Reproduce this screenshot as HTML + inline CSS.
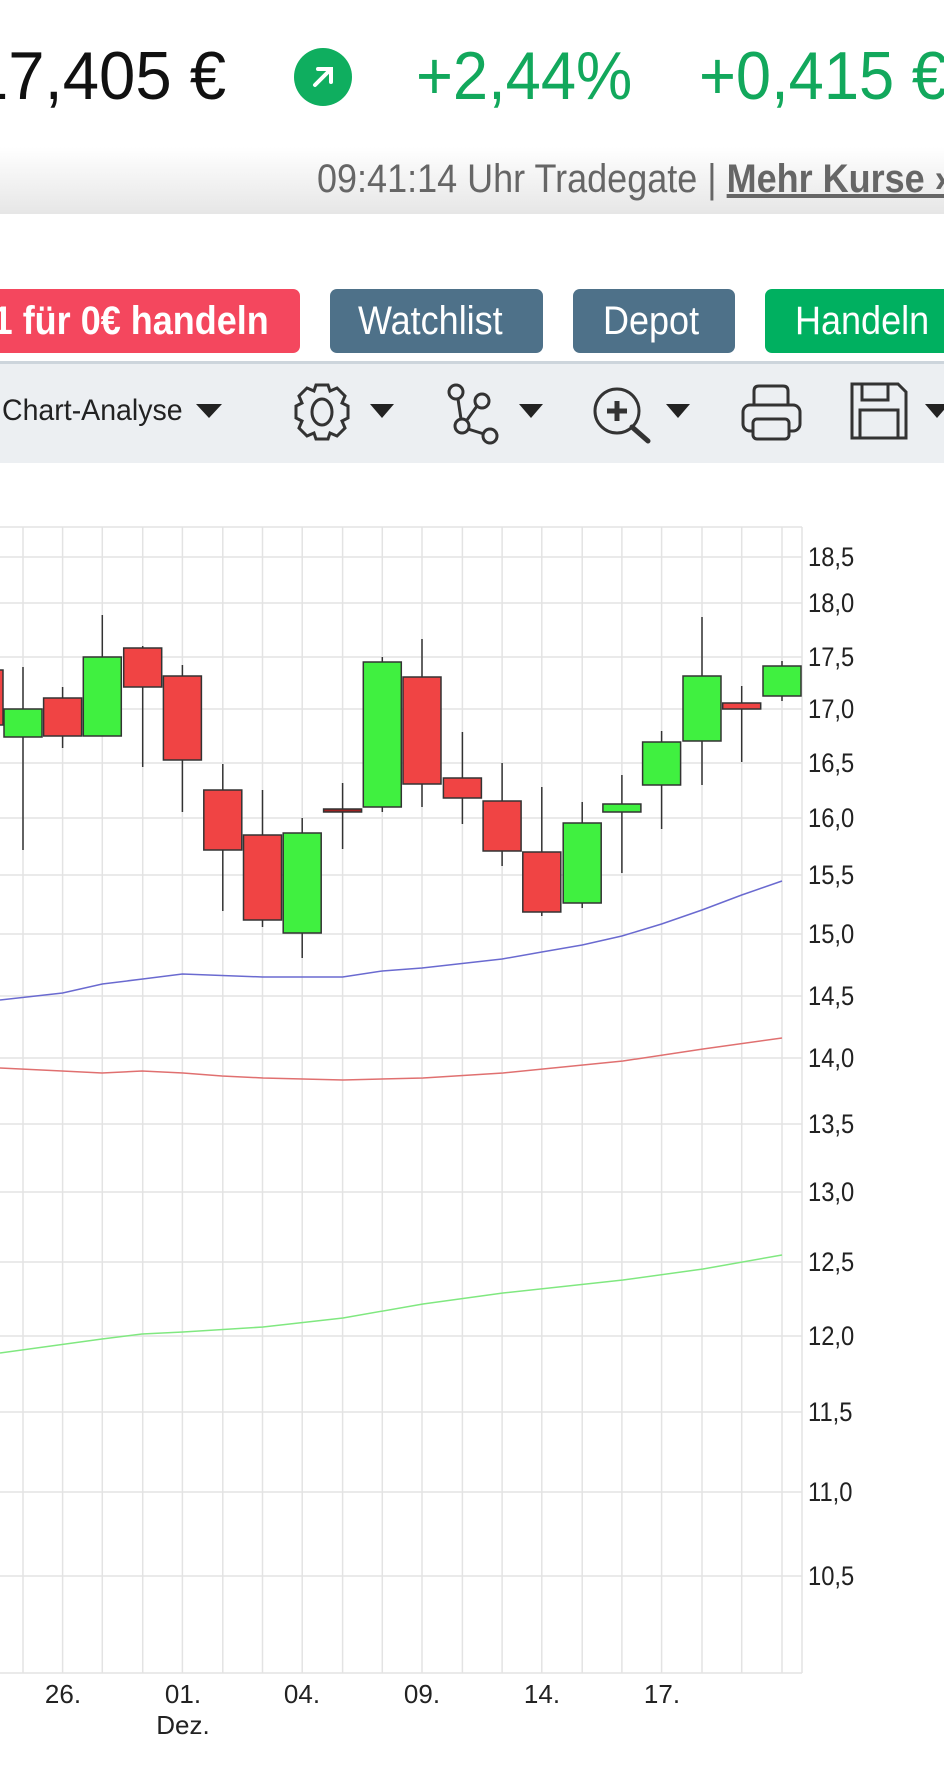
<!DOCTYPE html>
<html><head><meta charset="utf-8"><style>
*{margin:0;padding:0;box-sizing:border-box}
body{width:944px;height:1770px;background:#fff;position:relative;overflow:hidden;font-family:"Liberation Sans",sans-serif}
.a{position:absolute;white-space:nowrap}
.n{display:inline-block;transform-origin:left center;white-space:nowrap}
.btn{position:absolute;top:289px;height:64px;border-radius:7px;color:#fff;font-size:40px;line-height:64px;overflow:hidden;white-space:nowrap}
</style></head><body>
<div class="a" style="left:-28px;top:36px;font-size:68px;line-height:80px;color:#111"><span class="n" style="transform:scaleX(.96)">17,405 €</span></div>
<div class="a" style="left:294px;top:48px;width:58px;height:58px;border-radius:50%;background:#0fae5f"></div>
<svg class="a" style="left:294px;top:48px" width="58" height="58" viewBox="0 0 58 58"><path d="M21 37 L36 22 M24 21 H37 V34" stroke="#fff" stroke-width="4" fill="none" stroke-linecap="round"/></svg>
<div class="a" style="left:416px;top:36px;font-size:68px;line-height:80px;color:#12a85c"><span class="n" style="transform:scaleX(.93)">+2,44%</span></div>
<div class="a" style="left:699px;top:36px;font-size:68px;line-height:80px;color:#12a85c"><span class="n" style="transform:scaleX(.93)">+0,415 €</span></div>
<div class="a" style="left:0;top:147px;width:944px;height:67px;background:linear-gradient(#ffffff,#e6e6e6)"></div>
<div class="a" style="left:317px;top:156px;font-size:40px;line-height:46px;color:#666"><span class="n" style="transform:scaleX(.9)">09:41:14 Uhr Tradegate | <b style="text-decoration:underline">Mehr Kurse »</b></span></div>
<div class="btn" style="left:-20px;width:320px;background:#f4475e;font-weight:bold"><span class="n" style="position:absolute;right:31px;transform-origin:right center;transform:scaleX(.9)">1 für 0€ handeln</span></div>
<div class="btn" style="left:330px;width:213px;background:#4e7189"><span class="n" style="position:absolute;left:28px;transform:scaleX(.9)">Watchlist</span></div>
<div class="btn" style="left:573px;width:162px;background:#4e7189"><span class="n" style="position:absolute;left:30px;transform:scaleX(.9)">Depot</span></div>
<div class="btn" style="left:765px;width:200px;background:#00b060"><span class="n" style="position:absolute;left:30px;transform:scaleX(.9)">Handeln</span></div>
<div class="a" style="left:0;top:361px;width:944px;height:102px;background:#eceff2;border-top:3px solid #cdd5dc"></div>
<div class="a" style="left:2px;top:393px;font-size:30px;line-height:36px;color:#222"><span class="n" style="transform:scaleX(.95)">Chart-Analyse</span></div>
<svg class="a" style="left:0;top:361px" width="944" height="102">
<g fill="#222"><path d="M196 43h26l-13 14z"/><path d="M370 43h24l-12 14z"/><path d="M519 43h24l-12 14z"/><path d="M666 43h24l-12 14z"/><path d="M925 43h24l-12 14z"/></g>
<g fill="none" stroke="#333" stroke-width="3">
<path d="M316 24 l12 0 l2 6 l7 -3 l8 8 l-3 7 l6 3 v12 l-6 3 l3 7 l-8 8 l-7 -3 l-2 6 h-12 l-2 -6 l-7 3 l-8 -8 l3 -7 l-6 -3 v-12 l6 -3 l-3 -7 l8 -8 l7 3 z"/>
<ellipse cx="322" cy="51" rx="10" ry="13"/>
<circle cx="456" cy="31" r="7"/><circle cx="482" cy="40" r="7"/><circle cx="462" cy="65" r="7"/><circle cx="490" cy="75" r="7"/>
<path d="M458 38 L461 58 M477 45 L467 59 M468 68 L484 73"/>
<circle cx="617" cy="50" r="22"/><path d="M632 66 L648 80" stroke-width="5" stroke-linecap="round"/>
<path d="M617 40 v20 M607 50 h20" stroke-width="5"/>
<path d="M754 44 V30 q0-5 5-5 h24 q5 0 5 5 V44"/>
<rect x="743" y="44" width="57" height="26" rx="7"/>
<rect x="753" y="58" width="36" height="20" rx="4" fill="#eceff2"/>
<path d="M852 23 h46 l8 8 v46 h-54 z"/><path d="M862 23 v16 h26 v-16 M860 77 v-28 h38 v28"/>
</g></svg>
<svg class="a" style="left:0;top:0" width="944" height="1770" font-family="Liberation Sans, sans-serif">
<g stroke="#e3e3e3" stroke-width="1.5">
<line x1="0" y1="527" x2="802" y2="527"/>
<line x1="0" y1="557" x2="802" y2="557"/><line x1="0" y1="603" x2="802" y2="603"/><line x1="0" y1="657" x2="802" y2="657"/><line x1="0" y1="709" x2="802" y2="709"/><line x1="0" y1="763" x2="802" y2="763"/><line x1="0" y1="818" x2="802" y2="818"/><line x1="0" y1="875" x2="802" y2="875"/><line x1="0" y1="934" x2="802" y2="934"/><line x1="0" y1="996" x2="802" y2="996"/><line x1="0" y1="1058" x2="802" y2="1058"/><line x1="0" y1="1124" x2="802" y2="1124"/><line x1="0" y1="1192" x2="802" y2="1192"/><line x1="0" y1="1262" x2="802" y2="1262"/><line x1="0" y1="1336" x2="802" y2="1336"/><line x1="0" y1="1412" x2="802" y2="1412"/><line x1="0" y1="1492" x2="802" y2="1492"/><line x1="0" y1="1576" x2="802" y2="1576"/>
<line x1="0" y1="1673" x2="802" y2="1673"/>
<line x1="802" y1="527" x2="802" y2="1673"/>
<line x1="23" y1="527" x2="23" y2="1673"/><line x1="62.6" y1="527" x2="62.6" y2="1673"/><line x1="102.3" y1="527" x2="102.3" y2="1673"/><line x1="142.7" y1="527" x2="142.7" y2="1673"/><line x1="182.4" y1="527" x2="182.4" y2="1673"/><line x1="222.8" y1="527" x2="222.8" y2="1673"/><line x1="262.5" y1="527" x2="262.5" y2="1673"/><line x1="302.2" y1="527" x2="302.2" y2="1673"/><line x1="342.6" y1="527" x2="342.6" y2="1673"/><line x1="382.3" y1="527" x2="382.3" y2="1673"/><line x1="422" y1="527" x2="422" y2="1673"/><line x1="462.4" y1="527" x2="462.4" y2="1673"/><line x1="502.1" y1="527" x2="502.1" y2="1673"/><line x1="541.8" y1="527" x2="541.8" y2="1673"/><line x1="582.2" y1="527" x2="582.2" y2="1673"/><line x1="621.9" y1="527" x2="621.9" y2="1673"/><line x1="661.6" y1="527" x2="661.6" y2="1673"/><line x1="702" y1="527" x2="702" y2="1673"/><line x1="741.7" y1="527" x2="741.7" y2="1673"/><line x1="782" y1="527" x2="782" y2="1673"/>
</g>
<g font-size="27" fill="#222" transform="translate(808,0) scale(0.88,1)">
<text x="0" y="566">18,5</text><text x="0" y="612">18,0</text><text x="0" y="666">17,5</text><text x="0" y="718">17,0</text><text x="0" y="772">16,5</text><text x="0" y="827">16,0</text><text x="0" y="884">15,5</text><text x="0" y="943">15,0</text><text x="0" y="1005">14,5</text><text x="0" y="1067">14,0</text><text x="0" y="1133">13,5</text><text x="0" y="1201">13,0</text><text x="0" y="1271">12,5</text><text x="0" y="1345">12,0</text><text x="0" y="1421">11,5</text><text x="0" y="1501">11,0</text><text x="0" y="1585">10,5</text>
</g>
<g font-size="26" fill="#222" text-anchor="middle">
<text x="63" y="1703">26.</text><text x="183" y="1703">01.</text><text x="183" y="1734">Dez.</text><text x="302" y="1703">04.</text><text x="422" y="1703">09.</text><text x="542" y="1703">14.</text><text x="662" y="1703">17.</text>
</g>
<g fill="none" stroke-width="1.5">
<polyline stroke="#6a6ad0" points="0,1000 62.6,993 102.3,984 142.7,979 182.4,974 262.5,977 342.6,977 382.3,971 422,968 502.1,959 541.8,952 582.2,945 621.9,936 661.6,924 702,910 741.7,895 782,881"/>
<polyline stroke="#e07070" points="0,1068 62,1071 102,1073 142,1071 183,1073 222,1076 263,1078 343,1080 423,1078 503,1073 543,1069 623,1061 703,1049 782,1038"/>
<polyline stroke="#80e880" points="0,1353 102,1339 142,1334 183,1332 263,1327 343,1318 423,1304 503,1293 623,1280 703,1269 782,1255"/>
</g>
<g stroke="#333" stroke-width="1.5">
<line x1="23" y1="667" x2="23" y2="850"/><line x1="62.6" y1="687" x2="62.6" y2="748"/><line x1="102.3" y1="615" x2="102.3" y2="736"/><line x1="142.7" y1="646" x2="142.7" y2="767"/><line x1="182.4" y1="665" x2="182.4" y2="812"/><line x1="222.8" y1="764" x2="222.8" y2="911"/><line x1="262.5" y1="790" x2="262.5" y2="927"/><line x1="302.2" y1="818" x2="302.2" y2="958"/><line x1="342.6" y1="783" x2="342.6" y2="849"/><line x1="382.3" y1="657" x2="382.3" y2="812"/><line x1="422" y1="639" x2="422" y2="807"/><line x1="462.4" y1="732" x2="462.4" y2="824"/><line x1="502.1" y1="763" x2="502.1" y2="866"/><line x1="541.8" y1="787" x2="541.8" y2="916"/><line x1="582.2" y1="802" x2="582.2" y2="908"/><line x1="621.9" y1="775" x2="621.9" y2="873"/><line x1="661.6" y1="731" x2="661.6" y2="829"/><line x1="702" y1="617" x2="702" y2="785"/><line x1="741.7" y1="686" x2="741.7" y2="762"/><line x1="782" y1="661" x2="782" y2="701"/>
</g>
<g stroke="#333" stroke-width="1.5">
<rect x="-30" y="670" width="33" height="55" fill="#f04444"/>
<rect x="4" y="709" width="38" height="28" fill="#40f040"/>
<rect x="43.6" y="698" width="38" height="38" fill="#f04444"/>
<rect x="83.3" y="657" width="38" height="79" fill="#40f040"/>
<rect x="123.7" y="648" width="38" height="39" fill="#f04444"/>
<rect x="163.4" y="676" width="38" height="84" fill="#f04444"/>
<rect x="203.8" y="790" width="38" height="60" fill="#f04444"/>
<rect x="243.5" y="835" width="38" height="85" fill="#f04444"/>
<rect x="283.2" y="833" width="38" height="100" fill="#40f040"/>
<rect x="323.6" y="809" width="38" height="3" fill="#a02020"/>
<rect x="363.3" y="662" width="38" height="145" fill="#40f040"/>
<rect x="403" y="677" width="38" height="107" fill="#f04444"/>
<rect x="443.4" y="778" width="38" height="20" fill="#f04444"/>
<rect x="483.1" y="801" width="38" height="50" fill="#f04444"/>
<rect x="522.8" y="852" width="38" height="60" fill="#f04444"/>
<rect x="563.2" y="823" width="38" height="80" fill="#40f040"/>
<rect x="602.9" y="804" width="38" height="8" fill="#40f040"/>
<rect x="642.6" y="742" width="38" height="43" fill="#40f040"/>
<rect x="683" y="676" width="38" height="65" fill="#40f040"/>
<rect x="722.7" y="703" width="38" height="6" fill="#f04444"/>
<rect x="763" y="666" width="38" height="30" fill="#40f040"/>
</g>
</svg>
</body></html>
